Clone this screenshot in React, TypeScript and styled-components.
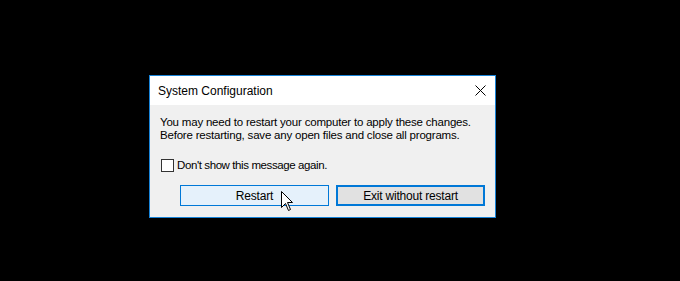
import React from "react";
import styled, { createGlobalStyle } from "styled-components";

const Global = createGlobalStyle`
  html, body { margin: 0; padding: 0; background: #000; }
  body { font-family: "Liberation Sans", Arial, sans-serif; }
`;

const Desktop = styled.div`
  width: 680px;
  height: 281px;
  background: #000;
  box-sizing: border-box;
  padding: 75px 0 0 149px;
  overflow: hidden;
`;

const Window = styled.div`
  width: 347px;
  height: 143px;
  box-sizing: border-box;
  border: 1px solid #1883d7;
  background: #f0f0f0;
  display: flex;
  flex-direction: column;
`;

const TitleBar = styled.div`
  height: 29px;
  background: #fff;
  display: flex;
  align-items: center;
  justify-content: space-between;
  padding: 0 9px 0 8px;
  font-size: 12px;
  color: #000;
`;

const Title = styled.span`
  padding-top: 1px;
  white-space: nowrap;
`;

const Close = styled.div`
  width: 11px;
  height: 11px;
  display: flex;
`;

const Body = styled.div`
  flex: 1;
  display: flex;
  flex-direction: column;
  padding: 11px 10px 0 10px;
  color: #000;
  white-space: nowrap;
`;

const Message = styled.p`
  margin: 0;
  font-size: 11.5px;
  letter-spacing: -0.2px;
  line-height: 13px;
`;

const CheckRow = styled.label`
  display: flex;
  align-items: center;
  gap: 3px;
  margin-top: 16px;
  margin-left: 1px;
  line-height: 15px;
  font-size: 11.5px;
  letter-spacing: -0.4px;
`;

const Box = styled.span`
  width: 13px;
  height: 13px;
  box-sizing: border-box;
  border: 1px solid #333;
  background: #fff;
`;

const Buttons = styled.div`
  display: flex;
  gap: 7px;
  margin-top: 12px;
  margin-left: 20px;
`;

const Button = styled.div<{ $variant: "hover" | "default" }>`
  position: relative;
  width: 149px;
  height: 21px;
  box-sizing: border-box;
  display: flex;
  align-items: center;
  justify-content: center;
  font-size: 12px;
  letter-spacing: -0.2px;
  color: #000;
  border: ${(p) => (p.$variant === "default" ? "2px solid #0078d7" : "1px solid #0078d7")};
  background: ${(p) => (p.$variant === "default" ? "#e1e1e1" : "#e5f1fb")};
`;

const Cursor = styled.svg`
  position: absolute;
  left: 100px;
  top: 5px;
`;

export default function App() {
  return (
    <Desktop>
      <Global />
      <Window>
        <TitleBar>
          <Title>System Configuration</Title>
          <Close>
            <svg width="11" height="11" viewBox="0 0 11 11">
              <path d="M0.5 0.5 L10.5 10.5 M10.5 0.5 L0.5 10.5" stroke="#000" strokeWidth="1" fill="none" />
            </svg>
          </Close>
        </TitleBar>
        <Body>
          <Message>
            You may need to restart your computer to apply these changes.
            <br />
            Before restarting, save any open files and close all programs.
          </Message>
          <CheckRow>
            <Box />
            <span>Don't show this message again.</span>
          </CheckRow>
          <Buttons>
            <Button $variant="hover">
              Restart
              <Cursor width="13" height="21" viewBox="0 0 13 21">
                <path
                  d="M0.5 0.5 L0.5 16.5 L4.5 12.5 L7.5 19.5 L9.5 18.5 L6.5 11.5 L11.5 11.5 Z"
                  fill="#fff"
                  stroke="#000"
                  strokeWidth="1"
                  strokeLinejoin="miter"
                />
              </Cursor>
            </Button>
            <Button $variant="default">Exit without restart</Button>
          </Buttons>
        </Body>
      </Window>
    </Desktop>
  );
}
